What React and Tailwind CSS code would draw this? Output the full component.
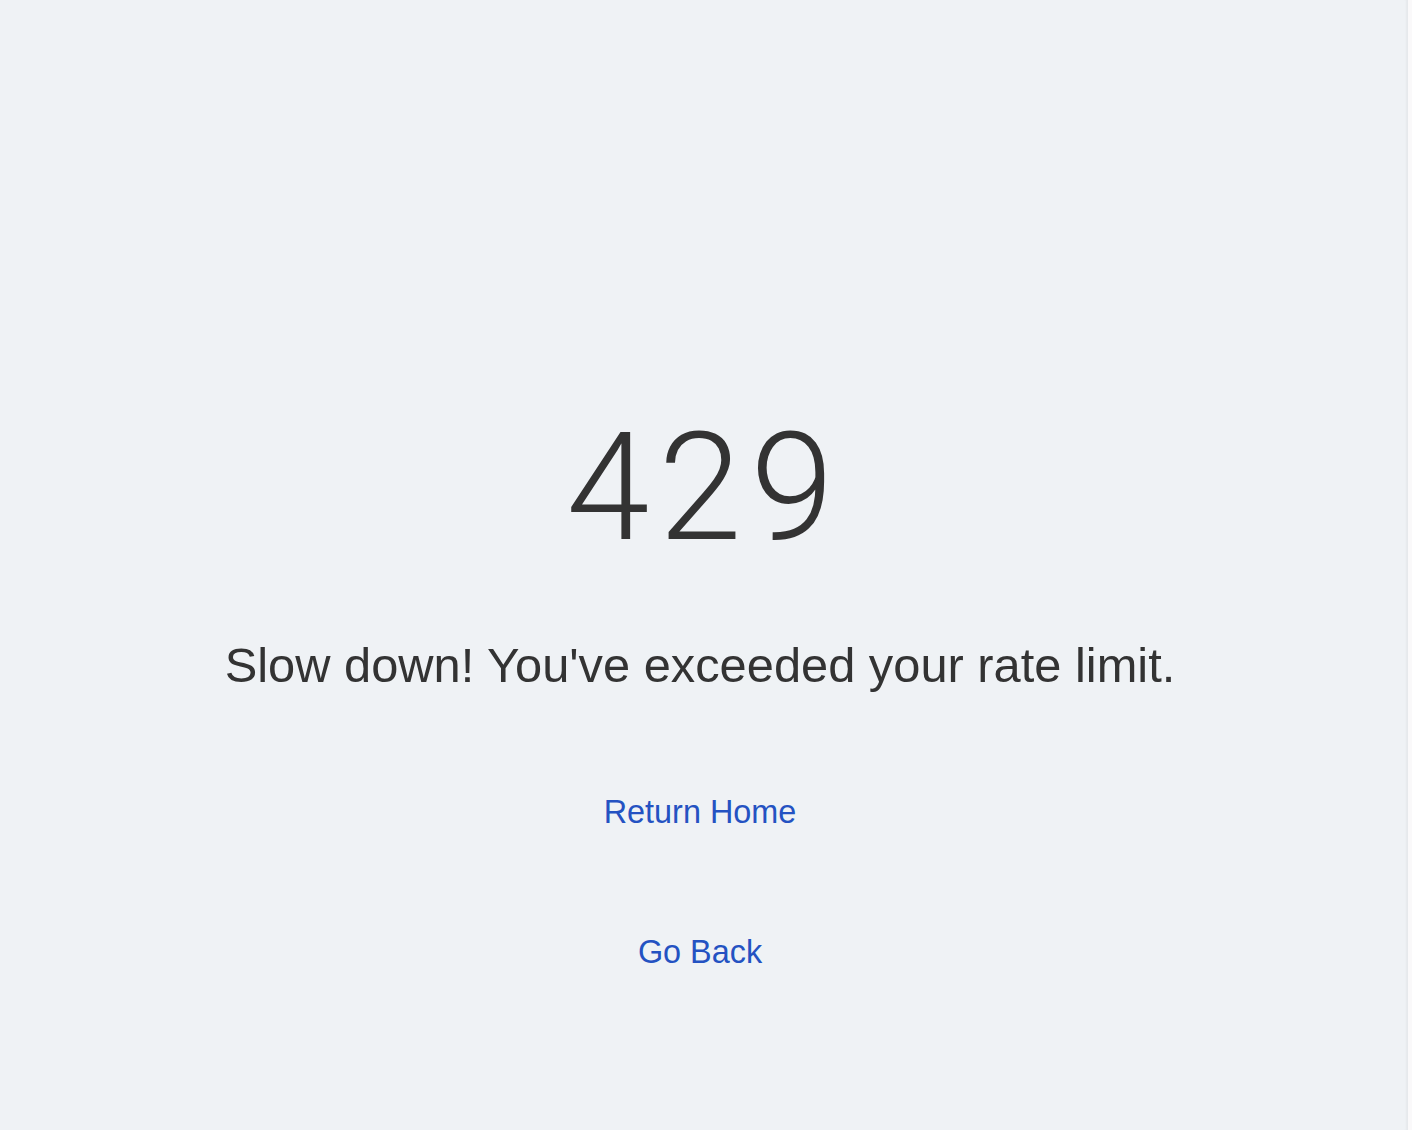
export default function App() {
  return (
    <div className="flex min-h-[1130px] w-full bg-[#faf9fa]">
      <div className="flex w-[1408px] flex-col items-start bg-[#eff2f5] shadow-[inset_-3px_0_2px_-1px_rgba(0,0,0,0.04)]">
        <div className="flex w-[1400px] flex-col items-center pt-[413px] text-[#333333]">
          <div className="h-[150px] pl-[9px] text-[150px] leading-none font-light tracking-[9px] [font-family:Roboto,'Liberation_Sans',sans-serif]">
            429
          </div>
          <h1 className="mt-[78px] text-[48.8px] leading-none [font-family:'Liberation_Sans',Arial,sans-serif]">
            Slow down! You've exceeded your rate limit.
          </h1>
          <a href="#" className="mt-[106px] text-[32.4px] leading-none text-[#2452c2] [font-family:'Liberation_Sans',Arial,sans-serif]">
            Return Home
          </a>
          <a href="#" className="mt-[108px] text-[32.4px] leading-none text-[#2452c2] [font-family:'Liberation_Sans',Arial,sans-serif]">
            Go Back
          </a>
        </div>
      </div>
    </div>
  );
}
